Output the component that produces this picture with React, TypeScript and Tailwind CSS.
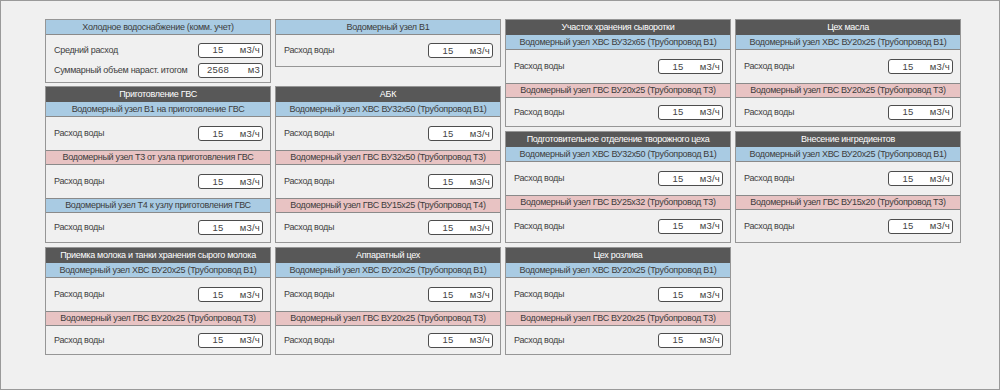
import React from 'react';

type Tone = 'blue' | 'pink';

interface Section {
  title: string;
  tone: Tone;
}

interface CardData {
  title?: string;
  sections: Section[];
  h: string;
}

const font = { fontFamily: '"Liberation Sans", Arial, sans-serif' };

const ValueBox: React.FC<{ value: string; unit: string }> = ({ value, unit }) => (
  <div className="flex items-center w-[65px] h-[15px] bg-white border-[1.5px] border-[#4d4d4d] rounded-[3px] text-[9.5px] tracking-[0.2px] text-[#444] leading-none">
    <span className="w-[38px] text-center">{value}</span>
    <span className="ml-auto pr-[2px]">{unit}</span>
  </div>
);

const Row: React.FC<{ label: string; value?: string; unit?: string; className?: string }> = ({
  label,
  value = '15',
  unit = 'м3/ч',
  className = '',
}) => (
  <div className={`flex items-center justify-between pl-[8px] pr-[7px] ${className}`}>
    <span className="text-[#3e3e3e]">{label}</span>
    <ValueBox value={value} unit={unit} />
  </div>
);

const SubHeader: React.FC<{ s: Section; first: boolean }> = ({ s, first }) => (
  <div
    className={`h-[15px] shrink-0 flex items-center justify-center border-b border-[#8a8a8a] text-[#3c3c3c] ${
      s.tone === 'blue' ? 'bg-[#a9cbe3]' : 'bg-[#e8c3c3]'
    } ${first ? '' : 'border-t'}`}
  >
    {s.title}
  </div>
);

// строки по 33px, последняя забирает остаток высоты карточки
const Card: React.FC<{ card: CardData }> = ({ card }) => (
  <div className={`flex flex-col border border-[#969696] bg-[#f0f0f0] ${card.h}`}>
    {card.title && (
      <div className="h-[15px] shrink-0 flex items-center justify-center bg-[#585858] text-white">
        {card.title}
      </div>
    )}
    {card.sections.map((s, i) => (
      <React.Fragment key={i}>
        <SubHeader s={s} first={i === 0} />
        <Row
          label="Расход воды"
          className={i === card.sections.length - 1 ? 'flex-1' : 'h-[33px] shrink-0'}
        />
      </React.Fragment>
    ))}
  </div>
);

const hvs = (size: string): Section => ({ title: `Водомерный узел ХВС ${size} (Трубопровод В1)`, tone: 'blue' });
const gvs = (size: string, pipe = 'Т3'): Section => ({
  title: `Водомерный узел ГВС ${size} (Трубопровод ${pipe})`,
  tone: 'pink',
});

const col2: CardData[] = [
  { sections: [{ title: 'Водомерный узел В1', tone: 'blue' }], h: 'h-[48px]' },
  { title: 'АБК', sections: [hvs('ВУ32х50'), gvs('ВУ32х50'), gvs('ВУ15х25', 'Т4')], h: 'h-[157px]' },
];

const col3: CardData[] = [
  { title: 'Участок хранения сыворотки', sections: [hvs('ВУ32х65'), gvs('ВУ20х25')], h: 'h-[108px]' },
  { title: 'Подготовительное отделение творожного цеха', sections: [hvs('ВУ32х50'), gvs('ВУ25х32')], h: 'flex-1' },
];

const col4: CardData[] = [
  { title: 'Цех масла', sections: [hvs('ВУ20х25'), gvs('ВУ20х25')], h: 'h-[108px]' },
  { title: 'Внесение ингредиентов', sections: [hvs('ВУ20х25'), gvs('ВУ15х20')], h: 'flex-1' },
];

const bottom: CardData[] = [
  { title: 'Приемка молока и танки хранения сырого молока', sections: [hvs('ВУ20х25'), gvs('ВУ20х25')], h: 'h-[108px]' },
  { title: 'Аппаратный цех', sections: [hvs('ВУ20х25'), gvs('ВУ20х25')], h: 'h-[108px]' },
  { title: 'Цех розлива', sections: [hvs('ВУ20х25'), gvs('ВУ20х25')], h: 'h-[108px]' },
];

const gvsPrep: CardData = {
  title: 'Приготовление ГВС',
  sections: [
    { title: 'Водомерный узел В1 на приготовление ГВС', tone: 'blue' },
    { title: 'Водомерный узел Т3 от узла приготовления ГВС', tone: 'pink' },
    { title: 'Водомерный узел Т4 к узлу приготовления ГВС', tone: 'blue' },
  ],
  h: 'h-[157px]',
};

export default function App() {
  return (
    <div
      className="w-[1000px] h-[390px] bg-[#f0f0f0] border border-[#9a9a9a] text-[9px] tracking-[-0.3px] leading-none pl-[44px] pt-[18px] overflow-hidden"
      style={font}
    >
      <div className="flex gap-[4px] h-[224px]">
        {/* колонка 1 */}
        <div className="w-[226px] flex flex-col justify-between">
          <div className="h-[64px] flex flex-col border border-[#969696] bg-[#f0f0f0]">
            <div className="h-[15px] shrink-0 flex items-center justify-center bg-[#a9cbe3] border-b border-[#8a8a8a] text-[#3c3c3c]">
              Холодное водоснабжение (комм. учет)
            </div>
            <div className="pt-[5px]">
              <Row label="Средний расход" className="h-[20px]" />
              <Row label="Суммарный объем нараст. итогом" value="2568" unit="м3" className="h-[20px]" />
            </div>
          </div>
          <Card card={gvsPrep} />
        </div>

        <div className="w-[226px] flex flex-col justify-between">
          {col2.map((c, i) => (
            <Card key={i} card={c} />
          ))}
        </div>

        <div className="w-[226px] flex flex-col gap-[4px]">
          {col3.map((c, i) => (
            <Card key={i} card={c} />
          ))}
        </div>

        <div className="w-[226px] flex flex-col gap-[4px]">
          {col4.map((c, i) => (
            <Card key={i} card={c} />
          ))}
        </div>
      </div>

      <div className="flex gap-[4px] mt-[4px]">
        {bottom.map((c, i) => (
          <div key={i} className="w-[226px]">
            <Card card={c} />
          </div>
        ))}
      </div>
    </div>
  );
}
